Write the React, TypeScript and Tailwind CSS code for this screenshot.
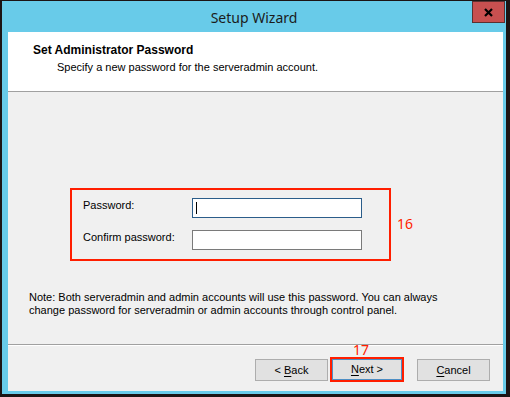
import React from 'react'

const dlg = "font-['Liberation_Sans',Arial,sans-serif] text-[11px] leading-[13px] text-black"

const App = () => {
    return (
        <div className="w-[510px] h-[397px] bg-[#1c1414] pt-px pl-[2px] pr-[4px] pb-[3px]">
            <div className="flex h-full flex-col bg-[#68cbe9]">
                {/* title bar */}
                <div className="grid h-[31px] shrink-0 grid-cols-[1fr_auto_1fr]">
                    <div />
                    <div className="pt-[7px] font-['Noto_Sans',sans-serif] text-[14px] leading-[19px] text-[#1b1b1b]">
                        Setup Wizard
                    </div>
                    <div className="flex justify-end">
                        <div className="mr-px flex h-[22px] w-[33px] items-center justify-center border border-[#5c3030] bg-[#c75050]">
                            <svg width="9" height="9" viewBox="0 0 9 9">
                                <path d="M1 1 L8 8 M8 1 L1 8" stroke="#000" strokeWidth="2.2" />
                            </svg>
                        </div>
                    </div>
                </div>

                <div className="mb-[3px] ml-[6px] mr-[3px] flex flex-1 flex-col bg-[#f0f0f0]">
                    {/* header */}
                    <div className={"h-[59px] shrink-0 bg-white pl-[25px] pt-[11px] " + dlg}>
                        <div className="text-[12px] font-bold leading-[14px]">Set Administrator Password</div>
                        <div className="mt-[4px] pl-[24px]">Specify a new password for the serveradmin account.</div>
                    </div>
                    <div className="h-px shrink-0 bg-[#a0a0a0]" />

                    {/* body */}
                    <div className={"flex flex-1 flex-col pt-[96px] " + dlg}>
                        <div className="ml-[62px] flex items-center">
                            <div className="h-[73px] w-[321px] border-2 border-[#ff1e00] pl-[11px] pt-[8px]">
                                <div className="flex">
                                    <div className="w-[109px] pt-px">Password:</div>
                                    <div className="flex h-[20px] w-[170px] items-center border border-[#2b5d8a] bg-white pl-[3px]">
                                        <span className="h-[12px] w-px bg-black" />
                                    </div>
                                </div>
                                <div className="mt-[12px] flex">
                                    <div className="w-[109px] pt-px">Confirm password:</div>
                                    <div className="h-[20px] w-[170px] border border-[#7a7a7a] bg-white" />
                                </div>
                            </div>
                            <div className="-mt-[3px] ml-[6px] font-['Noto_Sans',sans-serif] text-[14px] leading-[19px] text-[#ff1e00]">
                                16
                            </div>
                        </div>

                        <div className="ml-[21px] mt-[30px]">
                            Note: Both serveradmin and admin accounts will use this password. You can always
                            <br />
                            change password for serveradmin or admin accounts through control panel.
                        </div>
                    </div>

                    {/* footer */}
                    <div className="h-px shrink-0 bg-[#a0a0a0]" />
                    <div className="h-px shrink-0 bg-white" />
                    <div className={"flex h-[45px] shrink-0 items-start justify-end pr-[13px] pt-[13px] " + dlg}>
                        <div className="flex h-[22px] w-[73px] items-center justify-center border border-[#adadad] bg-[#e1e1e1]">
                            &lt;&nbsp;<span className="underline underline-offset-[2px]">B</span>ack
                        </div>
                        <div className="relative -mt-[2px] ml-[2px] h-[25px] w-[74px] border-2 border-[#ff1e00]">
                            <div className="flex h-full w-full items-center justify-center border border-[#4d8ec4] bg-[#e1e1e1]">
                                <span className="underline underline-offset-[2px]">N</span>ext &gt;
                            </div>
                            <span className="absolute -top-[16px] left-[21px] font-['Noto_Sans',sans-serif] text-[14px] leading-[14px] text-[#ff1e00]">
                                17
                            </span>
                        </div>
                        <div className="ml-[13px] flex h-[22px] w-[73px] items-center justify-center border border-[#adadad] bg-[#e1e1e1]">
                            <span className="underline underline-offset-[2px]">C</span>ancel
                        </div>
                    </div>
                </div>
            </div>
        </div>
    )
}

export default App
